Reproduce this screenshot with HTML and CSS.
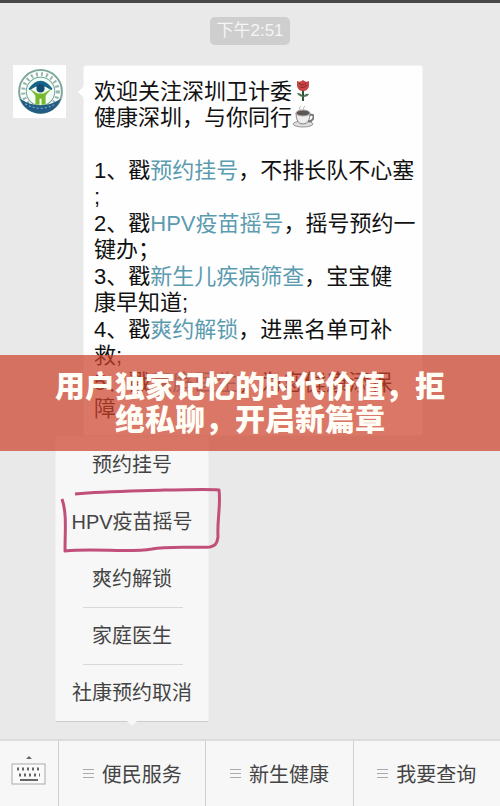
FILE: index.html
```html
<!DOCTYPE html>
<html lang="zh-CN">

<head>
    <meta charset="UTF-8">
    <meta name="viewport" content="width=device-width, initial-scale=1.0">
    <title>健康深圳</title>
    <link rel="stylesheet" href="styles.css">
</head>

<body>
    <main class="chat">
        <time class="time">下午2:51</time>

        <div class="message">
            <svg class="avatar" viewBox="0 0 52 52" role="img" aria-label="健康深圳">
                <rect width="52" height="52" fill="#fff" />
                <circle cx="27" cy="26" r="21" fill="#fff" stroke="#7da99d" stroke-width="2" />
                <circle cx="27" cy="26" r="17" fill="none" stroke="#9bb8af" stroke-width="4" stroke-dasharray="2 3" />
                <circle cx="27" cy="26" r="14" fill="#f4fff8" stroke="#6fa79e" />
                <path d="M7 33 Q27 46 47 33 A21 21 0 0 1 7 33Z" fill="#225c85" />
                <path d="M12 38 Q27 47 42 38" fill="none" stroke="#8db2ca" stroke-dasharray="2 2" />
                <path d="M16 24 Q27 9 38 24 Q27 15 16 24Z" fill="#17658a" stroke="#17658a" stroke-width="2" />
                <circle cx="27" cy="23" r="4" fill="#154c70" />
                <path d="M16 23 L22 30 V39 H26 V33 H28 V39 H32 V30 L38 23 L30 28 H24Z" fill="#78b82f" />
            </svg>
            <div class="bubble">
                <p class="intro">欢迎关注深圳卫计委<svg class="emoji" viewBox="0 0 22 22" aria-hidden="true">
                        <path d="M11 10 V21" stroke="#2f5436" stroke-width="2" />
                        <path d="M11 17 Q6 16 5 13 Q10 13 11 17 Q13 13 17 14 Q16 17 11 17" fill="#527758" />
                        <path d="M5 1 Q8 3 11 0 Q14 3 17 1 V6 Q16 11 11 11 Q6 11 5 6Z" fill="#c64445" />
                        <path d="M7 3 Q10 7 14 3 M8 7 Q12 9 15 5" fill="none" stroke="#8d2830" />
                    </svg><br>健康深圳，与你同行<svg class="emoji" viewBox="0 0 22 22" aria-hidden="true">
                        <ellipse cx="11" cy="18" rx="10" ry="3" fill="#ddd" stroke="#999" />
                        <path d="M4 7 Q4 18 11 18 Q18 18 18 7Z" fill="#eee" stroke="#888" />
                        <ellipse cx="11" cy="7" rx="7" ry="3" fill="#5d5653" stroke="#aaa" />
                        <path d="M18 9 Q23 8 21 13 Q19 16 16 15" fill="none" stroke="#777" stroke-width="2" />
                        <path d="M8 4 Q6 2 9 0 M12 4 Q10 2 13 0" fill="none" stroke="#bbb" />
                    </svg></p>
                <p class="item">1、戳<a href="#">预约挂号</a>，不排长队不心塞<br>;</p>
                <p class="item">2、戳<a href="#">HPV疫苗摇号</a>，摇号预约一<br>键办；</p>
                <p class="item">3、戳<a href="#">新生儿疾病筛查</a>，宝宝健<br>康早知道;</p>
                <p class="item">4、戳<a href="#">爽约解锁</a>，进黑名单可补<br>救;</p>
                <p class="item">5、戳<a href="#">家庭医生</a>，为您健康添保<br>障</p>
            </div>
        </div>

        <h1 class="banner">用户独家记忆的时代价值，拒绝私聊，开启新篇章</h1>

        <nav class="menu">
            <a href="#">预约挂号</a>
            <a href="#">HPV疫苗摇号</a>
            <a href="#">爽约解锁</a>
            <a class="ruled" href="#">家庭医生</a>
            <a class="ruled" href="#">社康预约取消</a>
            <svg class="mark" viewBox="0 0 160 66" aria-hidden="true">
                <path d="M14 6 C45 3 77 3 103 2 C125 2 145 1 158 2 C160 17 156 31 157 49 C156 56 154 58 149 59 C128 60 106 58 91 61 C68 65 34 60 4 63 C4 44 6 25 1 11" />
            </svg>
        </nav>
    </main>

    <footer class="toolbar">
        <button class="keyboard" type="button" aria-label="键盘">
            <svg viewBox="0 0 36 32" aria-hidden="true">
                <path d="M15 4 L18 1 L21 4Z" fill="#666" />
                <rect x="1" y="9" width="33" height="20" fill="#fafafa" stroke="#aaa" />
                <path d="M6 14 H31 M8 20 H29" fill="none" stroke="#666" stroke-width="3" stroke-dasharray="2 3" />
                <path d="M9 25 H27" stroke="#666" stroke-width="2" />
            </svg>
        </button>
        <button class="tab" type="button"><span class="lines"></span>便民服务</button>
        <button class="tab" type="button"><span class="lines"></span>新生健康</button>
        <button class="tab" type="button"><span class="lines"></span>我要查询</button>
    </footer>
</body>

</html>
```
FILE: styles.css
```css
* {
    box-sizing: border-box;
}

body {
    display: flex;
    flex-direction: column;
    min-height: 100vh;
    margin: 0;
    border-top: 3px solid #484848;
    background-color: #e9e9e9;
    color: #111;
    font-family: "Liberation Sans", "Noto Sans CJK SC", sans-serif;
}

p,
h1 {
    margin: 0;
}

a {
    color: inherit;
    text-decoration: none;
}

.chat {
    position: relative;
    display: flex;
    flex: 1;
    flex-direction: column;
    padding-top: 14px;
}

.time {
    align-self: center;
    padding: 0 6px;
    border-radius: 5px;
    background-color: #cecece;
    color: #f5f5f5;
    font-size: 17px;
    line-height: 28px;
}

.message {
    display: flex;
    align-items: flex-start;
    gap: 17px;
    padding: 20px 77px 0 13px;
}

.avatar {
    flex: none;
    width: 53px;
    height: 53px;
}

.bubble {
    position: relative;
    flex: 1;
    padding: 13px 0 12px 10px;
    border: 1px solid #f3f3f3;
    border-radius: 3px;
    background-color: #fefefe;
    font-size: 22px;
    line-height: 26px;
    white-space: nowrap;
}

.bubble::before {
    content: "";
    position: absolute;
    top: 20px;
    left: -6px;
    border: 6px solid transparent;
    border-right-color: #fefefe;
    border-left: 0;
}

.intro {
    margin-bottom: 27px;
}

.item {
    margin-bottom: 1px;
}

.item a {
    color: #5b9bb0;
}

.emoji {
    width: 22px;
    height: 22px;
    vertical-align: -3px;
}

.banner {
    position: absolute;
    top: 352px;
    right: 0;
    left: 0;
    z-index: 1;
    padding: 15px 50px;
    background-color: rgba(206, 68, 46, 0.73);
    color: #fffdf5;
    font-size: 30px;
    font-weight: 900;
    line-height: 33px;
    text-align: center;
}

.menu {
    position: relative;
    display: flex;
    flex-direction: column;
    width: 154px;
    margin-left: 55px;
    border: 1px solid #f0f0f0;
    border-bottom-color: #ccc;
    background-color: #f7f7f7;
    color: #444;
    font-size: 20px;
    line-height: 56px;
    text-align: center;
}

.menu a + a {
    border-top: 1px solid transparent;
}

.menu .ruled {
    border-image: linear-gradient(to right, transparent 18%, #d8d8d8 18%, #d8d8d8 83%, transparent 83%) 1;
}

.menu::after {
    content: "";
    position: absolute;
    bottom: -5px;
    left: 71px;
    border: 5px solid transparent;
    border-top-color: #f7f7f7;
    border-bottom: 0;
}

.mark {
    position: absolute;
    top: 51px;
    left: 5px;
    width: 160px;
    height: 66px;
    overflow: visible;
    fill: none;
    stroke: #c0507a;
    stroke-width: 3;
    stroke-linejoin: round;
}

.toolbar {
    display: flex;
    height: 67px;
    border-top: 2px solid #dcdcdc;
    background-color: #f7f7f7;
}

.toolbar button {
    padding: 0;
    border: 0;
    background: none;
    color: #444;
    font: inherit;
    font-size: 20px;
}

.keyboard {
    width: 58px;
}

.keyboard svg {
    width: 36px;
    height: 32px;
}

.toolbar .tab {
    display: flex;
    flex: 1;
    align-items: center;
    justify-content: center;
    gap: 8px;
    border-left: 1px solid #d0d0d0;
}

.lines {
    width: 11px;
    height: 9px;
    border-top: 1px solid #aaa;
    border-bottom: 1px solid #aaa;
    background: linear-gradient(#aaa, #aaa) center / 100% 1px no-repeat;
}
```
